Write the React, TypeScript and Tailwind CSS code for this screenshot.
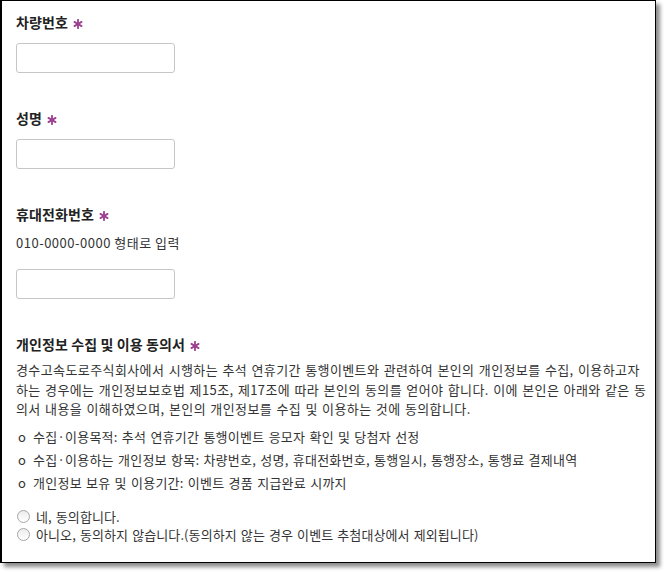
import React from "react";

const Star = () => (
    <svg viewBox="0 0 10 10" className="ml-[5px] inline-block h-[10px] w-[10px] align-[-1px]">
        <g stroke="#9c3f8f" strokeWidth="1.8" strokeLinecap="round">
            <line x1="5" y1="0.8" x2="5" y2="9.2" />
            <line x1="1.4" y1="2.9" x2="8.6" y2="7.1" />
            <line x1="1.4" y1="7.1" x2="8.6" y2="2.9" />
        </g>
    </svg>
);

function Label({ text }: { text: string }) {
    return (
        <div className="h-[22px] text-[14px] font-bold leading-[22px] tracking-[0.1px] text-[#222]">
            {text}
            <Star />
        </div>
    );
}

function Field({ label, hint }: { label: string; hint?: string }) {
    return (
        <div className="flex flex-col">
            <Label text={label} />
            {hint && <p className="mt-[8px] text-[13px] leading-[20px] tracking-[0.5px] text-[#333]">{hint}</p>}
            <input
                type="text"
                className={`${hint ? "mt-[16px]" : "mt-[10px]"} h-[30px] w-[159px] rounded-[3px] border border-[#c6c6c6] bg-white`}
            />
        </div>
    );
}

const bullets = [
    "수집·이용목적: 추석 연휴기간 통행이벤트 응모자 확인 및 당첨자 선정",
    "수집·이용하는 개인정보 항목: 차량번호, 성명, 휴대전화번호, 통행일시, 통행장소, 통행료 결제내역",
    "개인정보 보유 및 이용기간: 이벤트 경품 지급완료 시까지",
];

export default function App() {
    return (
        <div className="h-[572px] w-[664px] bg-white font-['Noto_Sans_CJK_KR',sans-serif]">
            <div className="h-[563px] w-[656px] overflow-hidden border border-l-2 border-black bg-white shadow-[4px_4px_4px_rgba(0,0,0,0.45)]">
                <div className="flex flex-col gap-[34px] pl-[14px] pt-[10px]">
                    <Field label="차량번호" />
                    <Field label="성명" />
                    <Field label="휴대전화번호" hint="010-0000-0000 형태로 입력" />

                    <div className="flex flex-col">
                        <Label text="개인정보 수집 및 이용 동의서" />
                        <div className="mt-[5px] text-[13px] leading-[19.5px] tracking-[0.4px] [word-spacing:1px] text-[#333]">
                            <p className="whitespace-nowrap">
                                경수고속도로주식회사에서 시행하는 추석 연휴기간 통행이벤트와 관련하여 본인의 개인정보를 수집, 이용하고자
                            </p>
                            <p className="whitespace-nowrap">
                                하는 경우에는 개인정보보호법 제15조, 제17조에 따라 본인의 동의를 얻어야 합니다. 이에 본인은 아래와 같은 동
                            </p>
                            <p className="whitespace-nowrap">
                                의서 내용을 이해하였으며, 본인의 개인정보를 수집 및 이용하는 것에 동의합니다.
                            </p>
                        </div>
                        <ul className="mt-[8px] flex flex-col gap-[3px] text-[13px] leading-[20px] tracking-[0.25px] [word-spacing:1px] text-[#333]">
                            {bullets.map((b) => (
                                <li key={b} className="flex whitespace-nowrap">
                                    <span className="ml-[2px] w-[15px]">o</span>
                                    {b}
                                </li>
                            ))}
                        </ul>
                        <div className="mt-[15px] flex flex-col text-[13px] leading-[18px] tracking-[0.1px] [word-spacing:1px] text-[#333]">
                            {["네, 동의합니다.", "아니오, 동의하지 않습니다.(동의하지 않는 경우 이벤트 추첨대상에서 제외됩니다)"].map((t) => (
                                <label key={t} className="flex items-center gap-[6px] whitespace-nowrap">
                                    <span className="ml-[1px] h-[13px] w-[13px] rounded-full border border-[#a6a6a6] bg-gradient-to-b from-[#ececec] to-white" />
                                    {t}
                                </label>
                            ))}
                        </div>
                    </div>
                </div>
            </div>
        </div>
    );
}
